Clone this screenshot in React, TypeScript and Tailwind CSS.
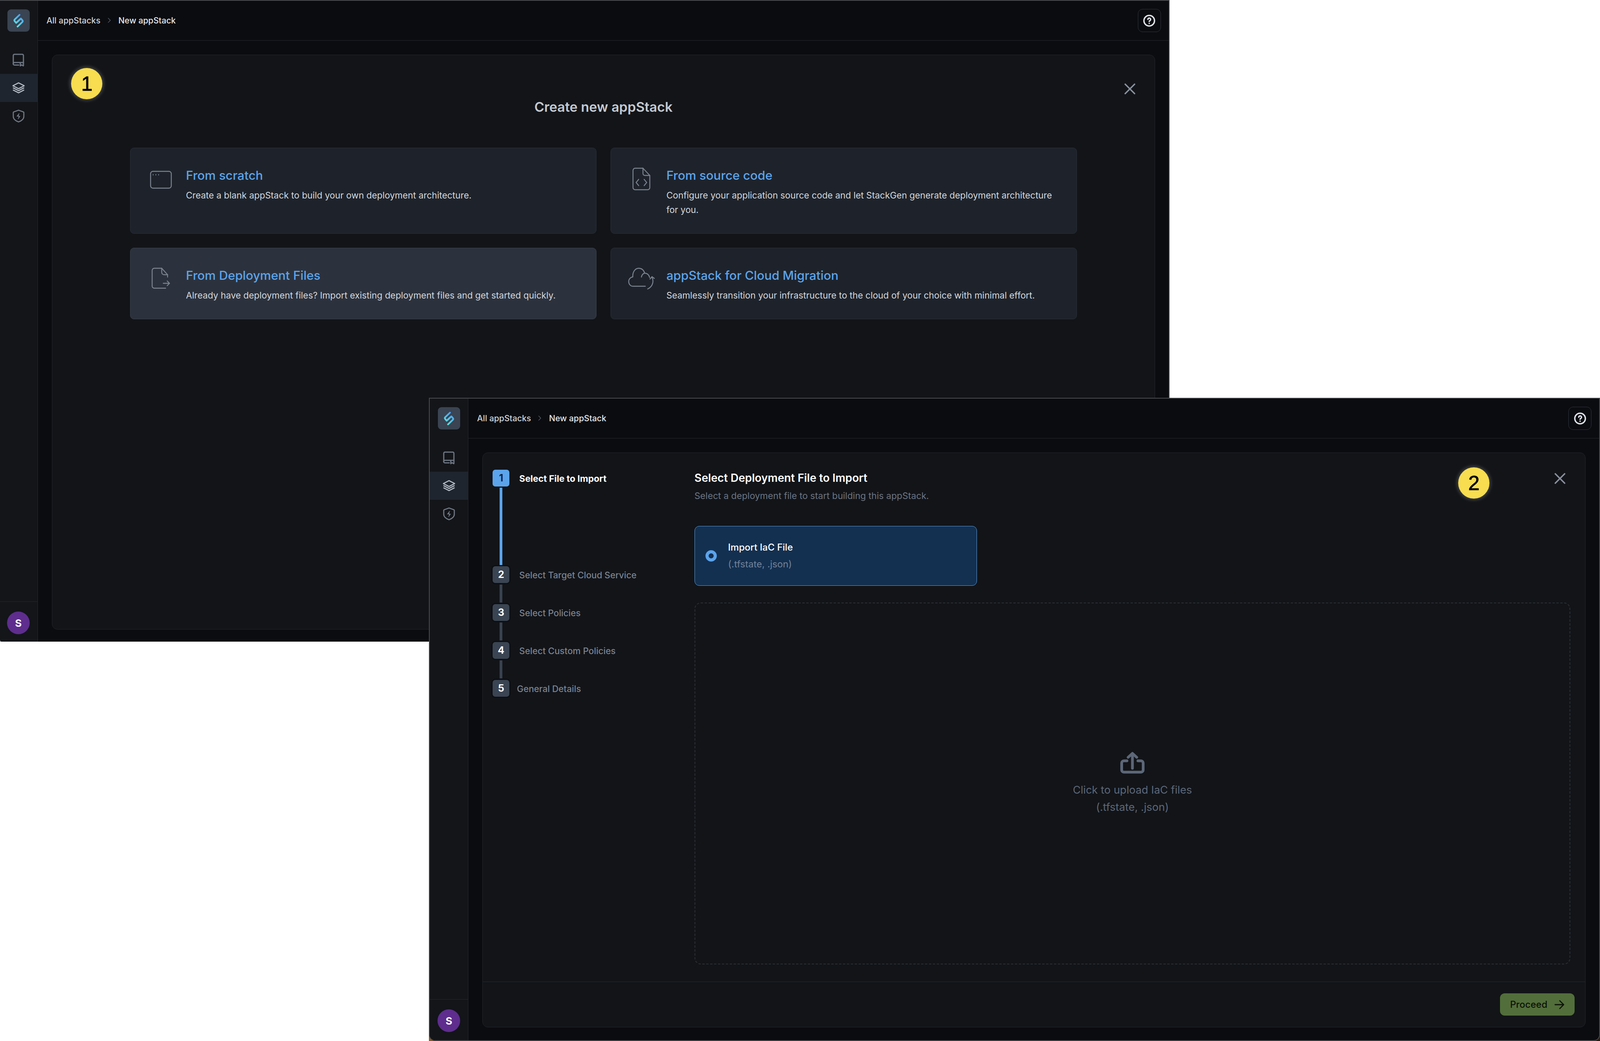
import React from "react";

const Logo = () => (
  <svg width="27" height="36" viewBox="0 0 27 36" fill="none">
    <defs>
      <linearGradient id="lg" x1="24" y1="2" x2="3" y2="32" gradientUnits="userSpaceOnUse">
        <stop offset="0" stopColor="#4c93ee" />
        <stop offset="1" stopColor="#62e6de" />
      </linearGradient>
    </defs>
    <path d="M16 3 L4 14.5 Q1.6 17 4 19.5 L7.5 23.5 L17 14.5" stroke="url(#lg)" strokeWidth="4.4" strokeLinecap="round" strokeLinejoin="round" />
    <path d="M11 33 L23 21.5 Q25.4 19 23 16.5 L19.5 12.5 L10 21.5" stroke="url(#lg)" strokeWidth="4.4" strokeLinecap="round" strokeLinejoin="round" />
  </svg>
);

const BookIcon = () => (
  <svg width="30" height="33" viewBox="0 0 30 33" fill="none" stroke="#6e7683" strokeWidth="3" strokeLinejoin="round" strokeLinecap="round">
    <path d="M2 26V5a3 3 0 0 1 3-3h20a3 3 0 0 1 3 3v26" />
    <path d="M16 29.5H5a3.2 3.2 0 0 1 0-6.5h23" />
    <path d="M20 24v7.5l3.5-2.5 4 2.5" />
  </svg>
);

const LayersIcon = () => (
  <svg width="33" height="30" viewBox="0 0 33 30" fill="none" stroke="#b4bac4" strokeWidth="2.6" strokeLinejoin="round" strokeLinecap="round">
    <path d="M16.5 2 31 9.5 16.5 17 2 9.5Z" />
    <path d="M3 15l13.5 7L30 15" />
    <path d="M3 20.5l13.5 7 13.5-7" />
  </svg>
);

const ShieldIcon = () => (
  <svg width="31" height="34" viewBox="0 0 31 34" fill="none" stroke="#717985" strokeWidth="2.8" strokeLinejoin="round" strokeLinecap="round">
    <path d="M15.5 2 28 6.5a1.5 1.5 0 0 1 1 1.4V18c0 6.5-6 11.5-13.5 14C8 29.5 2 24.5 2 18V7.9a1.5 1.5 0 0 1 1-1.4Z" />
    <path d="M17 10.5 11.5 17.5h7.5l-4.5 6.5" fill="#717985" strokeWidth="1.6" />
  </svg>
);

const HelpIcon = () => (
  <svg width="32" height="32" viewBox="0 0 32 32" fill="none" stroke="#dfe3e9" strokeWidth="3.6" strokeLinecap="round">
    <circle cx="16" cy="16" r="13.5" />
    <path d="M12.6 12.6a3.5 3.5 0 1 1 5.4 3.1c-1.2.8-2 1.2-2 2.2" />
    <path d="M16 22.8v.1" />
  </svg>
);

const CloseIcon = () => (
  <svg width="29" height="29" viewBox="0 0 29 29" fill="none" stroke="#8a919e" strokeWidth="3.6" strokeLinecap="round">
    <path d="M2.5 2.5l24 24M26.5 2.5l-24 24" />
  </svg>
);

const Chevron = () => (
  <svg width="10" height="14" viewBox="0 0 10 14" fill="none" stroke="#5b616c" strokeWidth="1.4" strokeLinecap="round" strokeLinejoin="round">
    <path d="M2 1.5 7.5 7 2 12.5" />
  </svg>
);

const BlankIcon = () => (
  <svg width="56" height="46" viewBox="0 0 56 46" fill="none" stroke="#7c8490" strokeWidth="2.4">
    <rect x="1.5" y="1.5" width="53" height="43" rx="6" />
    <path d="M8 9.5v1.5M15 9.5v1.5M22 9.5v1.5" strokeWidth="2" strokeLinecap="round" />
  </svg>
);

const CodeFileIcon = () => (
  <svg width="46" height="58" viewBox="0 0 46 58" fill="none" stroke="#7c8490" strokeWidth="2.4" strokeLinejoin="round" strokeLinecap="round">
    <path d="M27 1.5H7A5.5 5.5 0 0 0 1.5 7v44A5.5 5.5 0 0 0 7 56.5h32a5.5 5.5 0 0 0 5.5-5.5V20Z" />
    <path d="M27 1.5V15a5 5 0 0 0 5 5h12.5" />
    <path d="M16 30l-6.5 8 6.5 8M30 30l6.5 8-6.5 8" />
  </svg>
);

const ImportFileIcon = () => (
  <svg width="48" height="54" viewBox="0 0 48 54" fill="none" stroke="#7c8490" strokeWidth="2.4" strokeLinejoin="round" strokeLinecap="round">
    <path d="M41 24V18L26 1.5H7A5.5 5.5 0 0 0 1.5 7v40A5.5 5.5 0 0 0 7 52.5h29" />
    <path d="M26 1.5V12a6 6 0 0 0 6 6h9" />
    <path d="M30 40h16M40 34l6 6-6 6" />
  </svg>
);

const CloudIcon = () => (
  <svg width="68" height="56" viewBox="0 0 68 56" fill="none" stroke="#7c8490" strokeWidth="2.4" strokeLinejoin="round" strokeLinecap="round">
    <path d="M44 47.5H13C6 47.5 1.5 42 1.5 35.5 1.5 29 6 24.5 12 23.5 11 12 17.5 1.5 27 1.5c7.5 0 13 5 15.5 12.5C49 14 54 19 55 25" />
    <path d="M34 24c1-5 4-9 8.5-10" />
    <path d="M61 24.5c4.5 8 4 23-11 30" />
    <path d="M56 29l5-6 6 4.5" />
  </svg>
);

const UploadIcon = () => (
  <svg width="62" height="56" viewBox="0 0 62 56" fill="none" stroke="#5c6778" strokeWidth="7" strokeLinecap="round" strokeLinejoin="round">
    <path d="M31 42V5M20 14 31 4l11 10" />
    <path d="M17 23H9a5.5 5.5 0 0 0-5.5 5.5v18A5.5 5.5 0 0 0 9 52h44a5.5 5.5 0 0 0 5.5-5.5v-18A5.5 5.5 0 0 0 53 23h-8" />
  </svg>
);

const ArrowIcon = () => (
  <svg width="26" height="24" viewBox="0 0 26 24" fill="none" stroke="#0c1208" strokeWidth="2.8" strokeLinecap="round" strokeLinejoin="round">
    <path d="M2 12h22M14 2l10 10-10 10" />
  </svg>
);

function Badge({ n, className }: { n: string; className: string }) {
  return (
    <div className={`absolute w-[80px] h-[80px] rounded-full bg-[#f7dd4f] flex items-center justify-center text-black text-[52px] leading-none font-['Liberation_Sans',sans-serif] [-webkit-text-stroke:1px_black] shadow-[0_0_10px_3px_rgba(255,255,255,0.22)] ${className}`}>
      {n}
    </div>
  );
}

function Window({ outer, children }: { outer: string; children: React.ReactNode }) {
  return (
    <div className={`absolute h-[1646px] overflow-hidden rounded-b-[16px] border-2 border-[#4a4b4e] bg-[#0b0c10] ${outer}`}>
      <div className="flex h-full">
        <aside className="w-[99px] shrink-0 flex flex-col bg-[#131519] border-r border-[#25282e]">
          <div className="flex justify-center pt-[22px]">
            <div className="w-[57px] h-[57px] rounded-[9px] bg-[#3a4452] flex items-center justify-center">
              <Logo />
            </div>
          </div>
          <nav className="mt-[36px] flex-1 flex flex-col">
            <div className="h-[72px] flex items-center justify-center"><BookIcon /></div>
            <div className="h-[72px] flex items-center justify-center bg-[#1f252e]"><LayersIcon /></div>
            <div className="h-[72px] flex items-center justify-center"><ShieldIcon /></div>
          </nav>
          <div className="h-[105px] border-t border-[#25282e] pt-[25px] flex justify-center">
            <div className="w-[58px] h-[58px] rounded-full bg-[#5e2d8e] flex items-center justify-center text-white font-bold text-[26px]">S</div>
          </div>
        </aside>
        <div className="flex-1 min-w-0 flex flex-col">
          <header className="h-[102px] shrink-0 border-b border-[#25282e] flex items-center justify-between pl-[22px] pr-[20px] text-[21.2px] font-medium">
            <div className="flex items-center">
              <span className="text-[#cfd4db]">All appStacks</span>
              <span className="mx-[18px] flex"><Chevron /></span>
              <span className="text-[#e4e7ec]">New appStack</span>
            </div>
            <div className="w-[59px] h-[59px] rounded-[12px] border border-[#30353e] flex items-center justify-center"><HelpIcon /></div>
          </header>
          <main className="flex-1 min-h-0 pl-[36px] pr-[35px] pt-[36px] pb-[33px]">
            <div className="relative h-full rounded-[14px] border border-[#23262c] bg-[#121418] flex flex-col">
              {children}
            </div>
          </main>
        </div>
      </div>
    </div>
  );
}

function OptionCard({ icon, title, desc, active }: { icon: React.ReactNode; title: string; desc: string; active?: boolean }) {
  return (
    <div className={`flex rounded-[10px] border pl-[35px] pr-[48px] pt-[50px] pb-[42px] ${active ? "bg-[#2c323d] border-[#3a404b]" : "bg-[#1e232b] border-[#2a2f38]"}`}>
      <div className="w-[86px] shrink-0 flex justify-center items-start">{icon}</div>
      <div className="ml-[21px] min-w-0">
        <div className="h-[40px] leading-[40px] text-[31.5px] font-medium text-[#5ba4ec]">{title}</div>
        <p className="mt-[12px] text-[22.8px] leading-[37px] text-[#d3d7de]">{desc}</p>
      </div>
    </div>
  );
}

function Step({ n, label, active, offset }: { n: number; label: string; active?: boolean; offset?: boolean }) {
  return (
    <div className="flex items-center">
      <div className={`w-[43px] h-[43px] rounded-[7px] flex items-center justify-center font-bold text-[25px] ${active ? "bg-[#5ba4ec] text-[#14233a]" : "bg-[#3a4452] text-white shadow-[0_0_0_3px_#0c0e12]"}`}>{n}</div>
      <span className={`${offset ? "ml-[19px]" : "ml-[25px]"} pt-[3px] ${active ? "text-[23px] font-bold text-white" : "text-[22.6px] font-medium text-[#7a8291]"}`}>{label}</span>
    </div>
  );
}

const StepLine = ({ active }: { active?: boolean }) => (
  <div className={`ml-[18px] w-[7px] ${active ? "my-[3px] h-[198px] bg-[#5ba4ec]" : "my-[4px] h-[46px] bg-[#3a4250]"}`} />
);

export default function App() {
  return (
    <div className="relative w-full h-[2664px] overflow-hidden bg-white font-['Inter','Liberation_Sans',sans-serif]">
      <div className="absolute left-0 top-0 w-[73.09%] h-[1642px] overflow-hidden">
        <Window outer="left-[-4px] right-0 top-0">
          <button className="absolute right-[49px] top-[72px] flex"><CloseIcon /></button>
          <h1 className="pt-[108px] h-[158px] leading-[50px] text-center text-[34.3px] font-semibold text-[#c4c9d1]">Create new appStack</h1>
          <div className="mt-[79px] mx-[7.05%] grid grid-cols-2 gap-[36px]">
            <OptionCard icon={<div className="pt-[8px]"><BlankIcon /></div>} title="From scratch" desc="Create a blank appStack to build your own deployment architecture." />
            <OptionCard icon={<CodeFileIcon />} title="From source code" desc="Configure your application source code and let StackGen generate deployment architecture for you." />
            <OptionCard active icon={<ImportFileIcon />} title="From Deployment Files" desc="Already have deployment files? Import existing deployment files and get started quickly." />
            <OptionCard icon={<CloudIcon />} title="appStack for Cloud Migration" desc="Seamlessly transition your infrastructure to the cloud of your choice with minimal effort." />
          </div>
        </Window>
      </div>
      <Badge n="1" className="left-[4.453%] top-[174px]" />

      <div className="absolute left-[26.815%] top-[2640px] w-[24px] h-[24px] bg-[#8a5a28]" />
      <div className="absolute right-0 top-[2640px] w-[24px] h-[24px] bg-[#2a1a12]" />
      <Window outer="left-[26.815%] right-0 top-[1018px]">
        <button className="absolute right-[50px] top-[51px] flex"><CloseIcon /></button>
        <div className="flex-1 min-h-0 flex">
          <div className="w-[19.19%] shrink-0 pl-[25px] pt-[43px]">
            <Step n={1} label="Select File to Import" active />
            <StepLine active />
            <Step n={2} label="Select Target Cloud Service" />
            <StepLine />
            <Step n={3} label="Select Policies" />
            <StepLine />
            <Step n={4} label="Select Custom Policies" />
            <StepLine />
            <Step n={5} label="General Details" offset />
          </div>
          <div className="flex-1 min-w-0 flex flex-col pr-[38px] pt-[44px] pb-[44px]">
            <h2 className="h-[40px] leading-[40px] text-[28.2px] font-semibold text-white">Select Deployment File to Import</h2>
            <p className="mt-[9px] h-[34px] leading-[34px] text-[23.1px] text-[#6b7484]">Select a deployment file to start building this appStack.</p>
            <div className="mt-[60px] w-[723px] h-[153px] shrink-0 flex items-center rounded-[12px] border-[1.5px] border-[#5a9fe6] bg-[#143050] pl-[27px]">
              <div className="w-[29px] h-[29px] rounded-full border-[8px] border-[#5ba4ec] bg-[#143050]" />
              <div className="ml-[29px]">
                <div className="text-[24px] leading-[34px] font-medium text-white">Import IaC File</div>
                <div className="mt-[9px] text-[24px] leading-[34px] text-[#71829a]">(.tfstate, .json)</div>
              </div>
            </div>
            <div className="mt-[43px] flex-1 min-h-0 rounded-[16px] border-2 border-dashed border-[#2c2f35] flex flex-col items-center justify-center">
              <UploadIcon />
              <div className="mt-[19px] text-center text-[27.4px] leading-[44px] text-[#5c6778]">
                <div>Click to upload IaC files</div>
                <div>(.tfstate, .json)</div>
              </div>
            </div>
          </div>
        </div>
        <footer className="h-[116px] shrink-0 border-t border-[#25282e] flex justify-end pt-[29px] pr-[27px]">
          <button className="h-[57px] w-[191px] rounded-[12px] bg-[#526e3a] flex items-center justify-center gap-[18px] text-[24px] font-medium text-[#0c1208]">
            Proceed <ArrowIcon />
          </button>
        </footer>
      </Window>
      <Badge n="2" className="left-[91.14%] top-[1196px]" />
    </div>
  );
}
